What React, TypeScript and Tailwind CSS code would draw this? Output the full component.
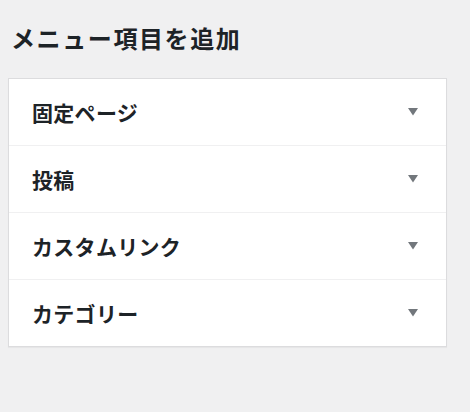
import React from 'react';

const items = ['固定ページ', '投稿', 'カスタムリンク', 'カテゴリー'];

const App: React.FC = () => {
  return (
    <div
      className="min-h-screen w-full bg-[#f0f0f1] text-[#1d2327]"
      style={{ fontFamily: '"Noto Sans CJK JP", "Noto Sans", sans-serif' }}
    >
      <div className="pl-[8px] pr-[23px] pt-[23px]">
        {/* Title */}
        <h2 className="pl-[3px] text-[24px] font-bold leading-[30px] tracking-[1.6px]">メニュー項目を追加</h2>

        {/* Accordion */}
        <div className="mt-[25px] border border-[#dcdcde] bg-white shadow-[0_1px_1px_rgba(0,0,0,0.04)]">
          {items.map((label, i) => (
            <div
              key={label}
              className={`flex items-center justify-between pl-[23px] pr-[28px] ${
                i < items.length - 1 ? 'h-[67px] border-b border-[#f0f0f1]' : 'h-[66px]'
              }`}
            >
              <span className="text-[21px] font-bold leading-none tracking-[0.3px]">{label}</span>
              <svg width="10" height="8" viewBox="0 0 10 8" className="block">
                <polygon points="0,0 10,0 5,7.5" fill="#72777c" />
              </svg>
            </div>
          ))}
        </div>
      </div>
    </div>
  );
};

export default App;
